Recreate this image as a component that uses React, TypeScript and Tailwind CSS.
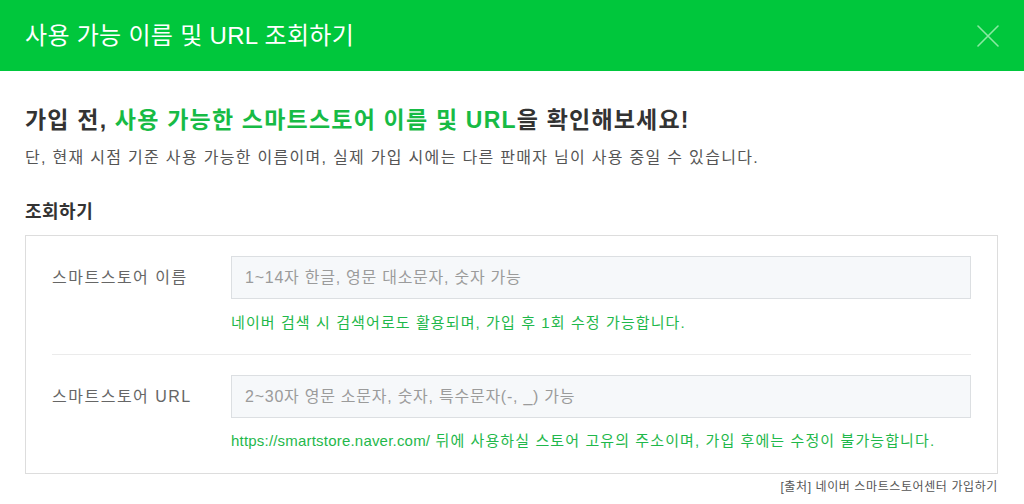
import React from 'react';

const FONT = '"Liberation Sans", "Noto Sans CJK KR", sans-serif';

const fields = [
	{
		label: '스마트스토어 이름',
		placeholder: '1~14자 한글, 영문 대소문자, 숫자 가능',
		url: '',
		help: '네이버 검색 시 검색어로도 활용되며, 가입 후 1회 수정 가능합니다.',
	},
	{
		label: '스마트스토어 URL',
		placeholder: '2~30자 영문 소문자, 숫자, 특수문자(-, _) 가능',
		url: 'https://smartstore.naver.com/',
		help: ' 뒤에 사용하실 스토어 고유의 주소이며, 가입 후에는 수정이 불가능합니다.',
	},
];

const CloseIcon: React.FC = () => (
	<svg width="22" height="22" viewBox="0 0 22 22" fill="none">
		<path d="M1 1L21 21M21 1L1 21" stroke="#8ae9a2" strokeWidth="1.6" strokeLinecap="round" />
	</svg>
);

export default function App() {
	return (
		<div className="w-[1024px] h-[504px] bg-white overflow-hidden" style={{ fontFamily: FONT }}>
			<header className="h-[71px] bg-[#00c73c] flex items-center justify-between pl-[25px] pr-[25px]">
				<h1 className="text-white text-[24px] leading-[30px] tracking-[0.3px] font-normal">사용 가능 이름 및 URL 조회하기</h1>
				<button type="button" className="flex items-center justify-center w-[22px] h-[22px]">
					<CloseIcon />
				</button>
			</header>

			<main className="pl-[25px] pr-[26px]">
				<h2 className="mt-[34px] text-[23px] leading-[30px] tracking-[1.2px] font-bold text-[#333]">
					가입 전, <span className="text-[#17bb45]">사용 가능한 스마트스토어 이름 및 URL</span>을 확인해보세요!
				</h2>
				<p className="mt-[12px] text-[16px] leading-[22px] tracking-[1.3px] text-[#555]">
					단, 현재 시점 기준 사용 가능한 이름이며, 실제 가입 시에는 다른 판매자 님이 사용 중일 수 있습니다.
				</p>

				<h3 className="mt-[31px] text-[18px] leading-[24px] tracking-[0.5px] font-bold text-[#333]">조회하기</h3>

				<div className="mt-[11px] border border-[#dddddd] px-[26px] pt-[20px] pb-[22px]">
					{fields.map((field, idx) => (
						<div key={field.label}>
							{idx > 0 && <div className="h-px bg-[#ebebeb] mt-[21px] mb-[20px]" />}
							<div className="flex items-center">
								<label className="w-[179px] shrink-0 text-[16px] tracking-[1.5px] text-[#666]">{field.label}</label>
								<input
									type="text"
									placeholder={field.placeholder}
									className="flex-1 h-[43px] border border-[#dcdfe2] bg-[#f6f8fa] pl-[13px] text-[16px] tracking-[0.75px] text-[#333] placeholder:text-[#9b9b9b] outline-none"
								/>
							</div>
							<p className={`${idx === 0 ? 'mt-[14px]' : 'mt-[13px]'} ml-[179px] text-[15px] leading-[20px] tracking-[1.1px] text-[#1fb84b] whitespace-nowrap`}>
								{field.url && <span className="tracking-[0.2px]">{field.url}</span>}
								{field.help}
							</p>
						</div>
					))}
				</div>

				<p className="mt-[5px] text-right text-[12px] leading-[16px] tracking-[0.6px] text-[#555]">
					[출처] 네이버 스마트스토어센터 가입하기
				</p>
			</main>
		</div>
	);
}
